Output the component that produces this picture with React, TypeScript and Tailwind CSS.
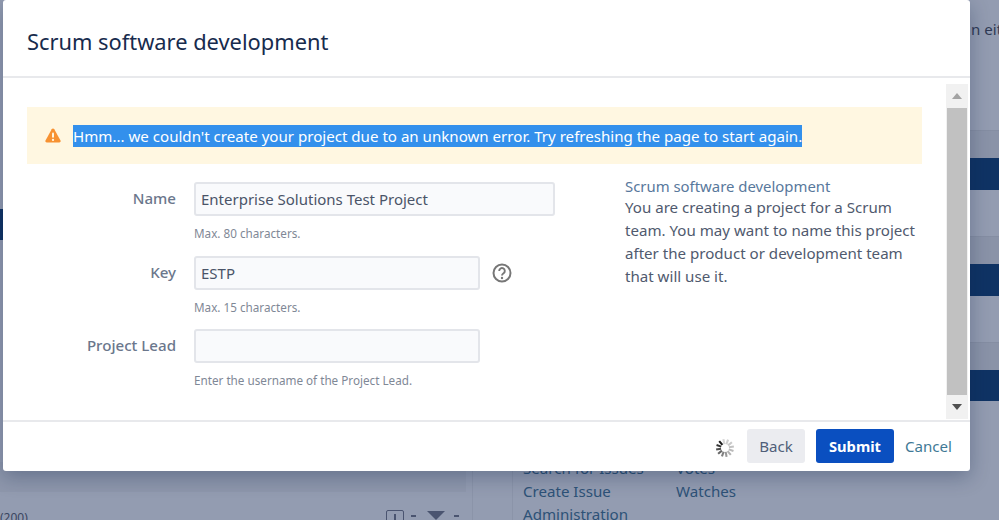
const spokes = [0, 1, 2, 3, 4, 5, 6, 7, 8, 9, 10, 11]

function Spinner() {
  // darkest spoke sits upper left, fading anticlockwise round the bottom
  return (
    <svg width="20" height="20" viewBox="0 0 20 20" className="mt-[4px] shrink-0">
      {spokes.map((i) => (
        <line
          key={i}
          x1="10"
          y1="1"
          x2="10"
          y2="6"
          stroke="#1c1c1c"
          strokeWidth="2.1"
          strokeOpacity={i < 7 ? 1 - i * 0.11 : 0.3 - (i - 7) * 0.03}
          transform={`rotate(${320 - i * 30} 10 10)`}
        />
      ))}
    </svg>
  )
}

function WarningIcon() {
  return (
    <svg width="16" height="15" viewBox="0 0 16 15" className="shrink-0">
      <path d="M6.7 1.2a1.5 1.5 0 0 1 2.6 0l6.2 11.2a1.5 1.5 0 0 1-1.3 2.2H1.8a1.5 1.5 0 0 1-1.3-2.2z" fill="#f79232" />
      <rect x="7" y="4.4" width="2" height="5.4" rx="1" fill="#fff7e1" />
      <circle cx="8" cy="11.9" r="1.15" fill="#fff7e1" />
    </svg>
  )
}

function HelpIcon() {
  return (
    <svg width="20" height="20" viewBox="0 0 20 20" className="shrink-0">
      <circle cx="10" cy="10" r="8.5" fill="none" stroke="#777777" strokeWidth="2" />
      <path d="M7.2 7.9a2.8 2.8 0 1 1 4.4 2.3c-1 .7-1.6 1.1-1.6 2.3" fill="none" stroke="#777777" strokeWidth="1.9" />
      <circle cx="10" cy="15" r="1.2" fill="#777777" />
    </svg>
  )
}

function Field({ label, value, width, help, icon, gap }: { label: string; value?: string; width: string; help: string; icon?: boolean; gap: string }) {
  return (
    <div className={`flex ${gap}`}>
      <div className="flex h-[34px] w-[149px] items-center justify-end pb-[1px] text-[15.1px] font-medium text-[#6b778c]">{label}</div>
      <div className="ml-[18px]">
        <div className="flex items-center">
          <div className={`${width} flex h-[34px] items-center rounded-[3px] border-2 border-[#e3e5ea] bg-[#f9fafc] px-[5px] text-[15px] text-[#4a5468]`}>
            {value}
          </div>
          {icon && (
            <div className="ml-[12px]">
              <HelpIcon />
            </div>
          )}
        </div>
        <div className="mt-[10px] flex h-[16px] items-center text-[11.7px] text-[#7f8896]">{help}</div>
      </div>
    </div>
  )
}

function Backdrop() {
  return (
    <div className="flex h-[520px] w-[999px] overflow-hidden bg-[#939cb1]">
      <div className="w-[473px] shrink-0 border-r border-[#8b94a9]">
        <div className="mt-[209px] h-[31px] bg-[#0f3364]" />
        <div className="mt-[222px] h-[30px] w-[466px] bg-[#8e97ac]" />
        <div className="mt-[18px] flex items-start justify-between pr-[13px] text-[#3a4560]">
          <span className="text-[12px] leading-[16px]">(200)</span>
          <div className="flex items-start">
            <div className="flex h-[16px] w-[18px] justify-center rounded-[2px] border border-[#4a5470] pt-[3px]">
              <div className="h-[10px] w-[2px] bg-[#4a5470]" />
            </div>
            <div className="ml-[7px] mt-[5px] h-[2px] w-[5px] bg-[#4a5470]" />
            <div className="ml-[11px] mt-[1px] h-0 w-0 border-x-[9px] border-t-[9px] border-x-transparent border-t-[#4a5470]" />
            <div className="ml-[9px] mt-[5px] h-[2px] w-[5px] bg-[#4a5470]" />
          </div>
        </div>
      </div>
      <div className="min-w-0 flex-1">
        <div className="h-[130px] pl-[498px] pt-[18px] text-[15.1px] whitespace-nowrap text-[#2f3a55]">n either</div>
        <div className="h-[28px] border-t border-[#858ea3] bg-[#8a93a8]" />
        <div className="h-[32px] bg-[#0f3364]" />
        <div className="h-[46px]" />
        <div className="h-[28px] border-t border-[#858ea3] bg-[#8a93a8]" />
        <div className="h-[32px] bg-[#0f3364]" />
        <div className="h-[46px]" />
        <div className="h-[28px] border-t border-[#858ea3] bg-[#8a93a8]" />
        <div className="h-[31px] bg-[#0f3364]" />
        <div className="ml-[39px] mt-[56px] border-l border-[#8b94a9] pl-[10px] text-[15.1px] leading-[23px] text-[#2d5277]">
          <div className="flex">
            <span className="w-[153px]">Search for Issues</span>
            <span>Votes</span>
          </div>
          <div className="flex">
            <span className="w-[153px]">Create Issue</span>
            <span>Watches</span>
          </div>
          <div>Administration</div>
        </div>
      </div>
    </div>
  )
}

export default function App() {
  return (
    <div className="relative h-[520px] w-[999px] overflow-hidden font-['Noto_Sans',sans-serif]">
      <Backdrop />

      <div className="absolute left-[3px] top-0 flex h-[471px] w-[967px] flex-col rounded-[3px] bg-white shadow-[0_6px_20px_rgba(9,30,66,0.3)]">
        <div className="flex h-[78px] shrink-0 items-center border-b-2 border-[#e8e9ec] pl-[24px] pt-[8px] text-[21.85px] text-[#172b4d]">
          Scrum software development
        </div>

        <div className="flex min-h-0 flex-1">
          <div className="w-[943px] shrink-0 pl-[24px] pt-[29px]">
            <div className="flex h-[57px] w-[895px] items-center bg-[#fff7e1] pl-[18px]">
              <WarningIcon />
              <span className="ml-[12px] inline-block bg-[#3390ec] text-[15.1px] leading-[22px] text-white">
                Hmm... we couldn't create your project due to an unknown error. Try refreshing the page to start again.
              </span>
            </div>

            <div className="mt-[18px] flex">
              <div className="w-[598px] shrink-0">
                <Field label="Name" value="Enterprise Solutions Test Project" width="w-[361px]" help="Max. 80 characters." gap="mb-[14px]" />
                <Field label="Key" value="ESTP" width="w-[286px]" help="Max. 15 characters." icon gap="mb-[13px]" />
                <Field label="Project Lead" width="w-[286px]" help="Enter the username of the Project Lead." gap="" />
              </div>
              <div className="-mt-[5px] w-[296px] text-[15.1px] leading-[23px] text-[#505a6e]">
                <div className="text-[14.9px] leading-[19px] text-[#58789c]">Scrum software development</div>
                You are creating a project for a Scrum team. You may want to name this project after the product or development team that will use it.
              </div>
            </div>
          </div>

          <div className="mb-[1px] mt-[6px] flex w-[22px] shrink-0 flex-col items-center bg-[#f1f1f1]">
            <div className="flex h-[24px] items-center justify-center">
              <div className="h-0 w-0 border-x-[5px] border-b-[6px] border-x-transparent border-b-[#a3a3a3]" />
            </div>
            <div className="w-[20px] flex-1 bg-[#c1c1c1]" />
            <div className="flex h-[24px] items-center justify-center">
              <div className="h-0 w-0 border-x-[5px] border-t-[6px] border-x-transparent border-t-[#505050]" />
            </div>
          </div>
        </div>

        <div className="flex h-[51px] shrink-0 items-center justify-end border-t-2 border-[#e8e9ec] pb-[2px] pr-[18px]">
          <Spinner />
          <div className="ml-[12px] flex h-[34px] w-[58px] items-center justify-center rounded-[3px] bg-[#ebecf0] pt-[2px] text-[15.1px] text-[#505f79]">Back</div>
          <div className="ml-[11px] flex h-[34px] w-[78px] items-center justify-center rounded-[3px] bg-[#0a4fc0] pt-[2px] text-[14.7px] font-bold text-white">Submit</div>
          <div className="ml-[11px] pt-[2px] text-[15.1px] text-[#3f7a96]">Cancel</div>
        </div>
      </div>
    </div>
  )
}
